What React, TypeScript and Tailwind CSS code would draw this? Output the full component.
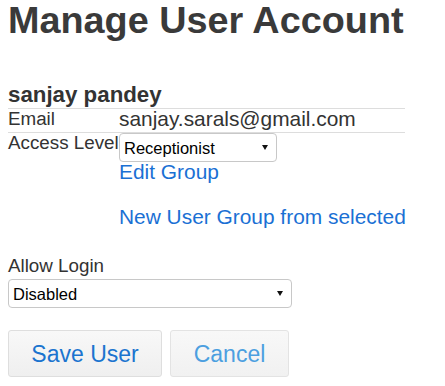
import React from "react";

function Arrow() {
  return (
    <svg width="6" height="5" viewBox="0 0 6 5" className="shrink-0">
      <polygon points="0,0 6,0 3,5" fill="#111" />
    </svg>
  );
}

function FakeSelect({ value, width }: { value: string; width: string }) {
  return (
    <div
      className={`${width} h-[29px] border border-[#c8c8c8] rounded-[4px] bg-white flex items-center justify-between pl-[4px] pr-[8px] text-[16.5px] leading-[20px] text-black`}
    >
      <span>{value}</span>
      <Arrow />
    </div>
  );
}

export default function App() {
  return (
    <div className="w-[445px] min-h-[386px] bg-white pl-2 font-['Liberation_Sans',Arial,sans-serif] text-[#333]">
      <h1 className="m-0 whitespace-nowrap text-[37.8px] font-bold leading-[40px] text-[#3a3a3a]">
        Manage User Account
      </h1>

      <div className="mt-[42px] w-[397px] border-b border-[#dddddd] text-[22.3px] font-bold leading-[26px] text-[#333]">
        sanjay pandey
      </div>

      <div className="grid w-[397px] grid-cols-[111px_1fr] border-b border-[#dddddd] pb-[3px]">
        <div className="text-[18.8px] leading-[20px]">Email</div>
        <div className="whitespace-nowrap text-[20.9px] leading-[20px]">sanjay.sarals@gmail.com</div>
      </div>

      <div className="grid w-[397px] grid-cols-[111px_1fr]">
        <div className="whitespace-nowrap text-[18.8px] leading-[20px]">Access Level</div>
        <div className="flex flex-col items-start">
          <FakeSelect value="Receptionist" width="w-[158px]" />
          <a className="whitespace-nowrap text-[20.9px] leading-[20px] text-[#1a70d4] cursor-pointer">Edit Group</a>
          <a className="mt-[25px] whitespace-nowrap text-[20.9px] leading-[20px] text-[#1a70d4] cursor-pointer">
            New User Group from selected
          </a>
        </div>
      </div>

      <div className="mt-[29px] text-[18.8px] leading-[20px]">Allow Login</div>
      <div className="mt-[3px]">
        <FakeSelect value="Disabled" width="w-[284px]" />
      </div>

      <div className="mt-[22px] flex gap-2">
        <button className="h-[47px] w-[154px] rounded-[3px] border border-[#dedede] bg-linear-to-b from-[#f8f8f8] to-[#efefef] text-[23px] leading-[26px] text-[#1b74cf]">
          Save User
        </button>
        <button className="h-[47px] w-[119px] rounded-[3px] border border-[#e3e3e3] bg-linear-to-b from-[#f8f8f8] to-[#f1f1f1] text-[23px] leading-[26px] text-[#4c9fe0]">
          Cancel
        </button>
      </div>
    </div>
  );
}
